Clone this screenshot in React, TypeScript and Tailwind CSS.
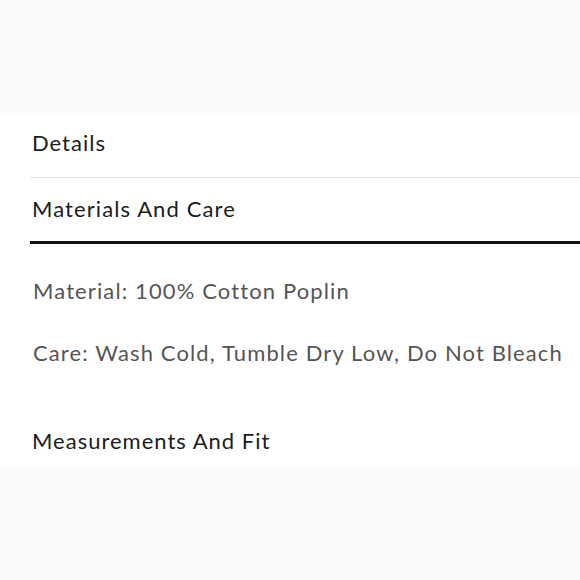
const font = { fontFamily: 'Lato, "Open Sans", sans-serif' };

export default function App() {
  return (
    <div className="w-[580px] h-[580px] flex flex-col bg-white overflow-hidden" style={font}>
      <div className="h-[113px] bg-[#fafafa]" />
      <div className="h-[354px] flex flex-col pl-[30px] bg-white text-[22px] leading-[22px] tracking-[1px]">
        <div className="h-[65px] pt-[19px] pl-[2px] text-[#1c1c1c] border-b border-[#e2e2e2]">
          Details
        </div>
        <div className="h-[66px] pt-[20px] pl-[2px] text-[#1c1c1c] tracking-[1.1px] border-b-[3px] border-[#111]">
          Materials And Care
        </div>
        <div className="flex flex-col gap-[40px] pt-[36px] pl-[3px] text-[#555] tracking-[1.12px]">
          <p>Material: 100% Cotton Poplin</p>
          <p>Care: Wash Cold, Tumble Dry Low, Do Not Bleach</p>
        </div>
        <div className="pt-[66px] pl-[2px] text-[#1c1c1c]">
          Measurements And Fit
        </div>
      </div>
      <div className="flex-1 bg-[#fafafa]" />
    </div>
  );
}
